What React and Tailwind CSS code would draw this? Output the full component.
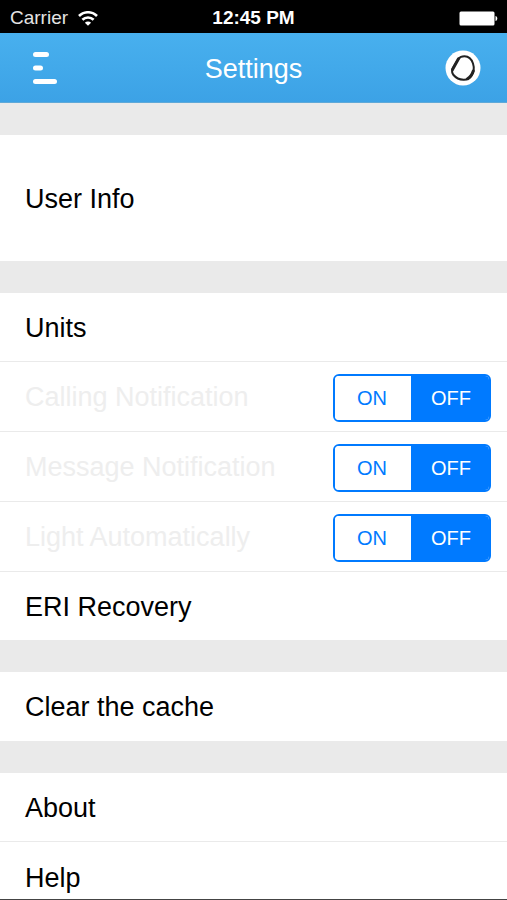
import React, { useState } from 'react';

const initialToggles = [
  { id: 'calling', label: 'Calling Notification', on: false },
  { id: 'message', label: 'Message Notification', on: false },
  { id: 'light', label: 'Light Automatically', on: false },
];

function StatusBar() {
  return (
    <div className="grid h-[33px] grid-cols-3 items-center bg-black pt-1 text-[19px] text-white">
      <div className="flex items-center gap-[10px] pl-[10px] text-[#e4e4e4]">
        <span>Carrier</span>
        <svg width="20" height="15" viewBox="0 0 20 15" fill="none" stroke="white" strokeWidth="2.6">
          <path d="M1 5a12.700 12.700 0 0 1 18 0" />
          <path d="M4.400 8.800a8 8 0 0 1 11.200 0" />
          <path d="M10 14.800 6.900 11.800a4.400 4.400 0 0 1 6.200 0z" fill="white" stroke="none" />
        </svg>
      </div>
      <div className="text-center font-bold">12:45 PM</div>
      <div className="flex justify-end pr-[9px]">
        <svg width="39" height="15" viewBox="0 0 39 15" fill="white">
          <rect x="0.5" y="0.5" width="35" height="14" rx="1.5" />
          <path d="M36.500 5c2.400.6 2.400 4.400 0 5z" />
        </svg>
      </div>
    </div>
  );
}

function NavBar() {
  return (
    <header className="grid h-[70px] grid-cols-3 items-center border-b border-[#5fa9d8] bg-linear-to-b from-[#48b0ee] to-[#3ca2e6] text-white">
      <button type="button" aria-label="Menu" className="ml-8 justify-self-start">
        <svg width="26" height="34" viewBox="0 0 26 34" fill="none" stroke="white" strokeWidth="5" strokeLinecap="round">
          <path d="M3.500 3.500h11M3.500 17h5M3.500 30.500h19" />
        </svg>
      </button>
      <h1 className="pt-[3px] text-center">Settings</h1>
      <button type="button" aria-label="Device" className="mr-[26px] justify-self-end">
        <svg width="36" height="36" viewBox="0 0 36 36">
          <circle cx="18" cy="18" r="17.5" fill="white" />
          <path
            d="M13.500 8.800C15 6.800 16.500 6.300 19.500 6.300C24 6.300 26.500 9 28 13.500C29.300 17.500 28.800 22 26.500 25.500C24.500 28.500 22 30 18.500 29.800C14.500 29.600 11 28 8.500 25C6.500 22.500 6.700 20.500 8 18Z"
            fill="none"
            stroke="#222"
            strokeWidth="2"
          />
          <path d="M7.500 19.500 13.500 8.800M28.300 21C27 25 25 27.500 22.500 28.800" fill="none" stroke="#222" strokeWidth="3" strokeLinecap="round" />
        </svg>
      </button>
    </header>
  );
}

function LinkRow({ label, height = 'h-[68px]' }) {
  return (
    <button type="button" className={`block w-full bg-white px-[25px] pt-[2px] text-left text-black ${height}`}>
      {label}
    </button>
  );
}

function ToggleRow({ label, on, onChange }) {
  return (
    <div className="flex h-[69px] items-center justify-between bg-white pt-[2px] pr-4 pl-[25px]">
      <span className="text-[#eeeeee]">{label}</span>
      <div
        role="group"
        aria-label={label}
        className="flex h-12 w-[158px] overflow-hidden rounded-md border-2 border-[#007aff] text-[20px]"
      >
        <button
          type="button"
          aria-pressed={on}
          onClick={() => onChange(true)}
          className={`w-[76px] pr-[2px] ${on ? 'bg-[#007aff] text-white' : 'bg-white text-[#007aff]'}`}
        >
          ON
        </button>
        <button
          type="button"
          aria-pressed={!on}
          onClick={() => onChange(false)}
          className={`flex-1 pl-[2px] ${on ? 'bg-white text-[#007aff]' : 'bg-[#007aff] text-white'}`}
        >
          OFF
        </button>
      </div>
    </div>
  );
}

export default function App() {
  const [toggles, setToggles] = useState(initialToggles);

  const setToggle = (id, on) => {
    setToggles(prev => prev.map(t => (t.id === id ? { ...t, on } : t)));
  };

  return (
    <div className="h-screen overflow-hidden border-b border-[#444444] bg-[#eaeaea] font-['Liberation_Sans',Arial,sans-serif] text-[27px]">
      <StatusBar />
      <NavBar />
      <main className="flex flex-col gap-8 pt-8">
        <LinkRow label="User Info" height="h-[126px]" />
        <section className="flex flex-col gap-px">
          <LinkRow label="Units" />
          {toggles.map(t => (
            <ToggleRow key={t.id} label={t.label} on={t.on} onChange={on => setToggle(t.id, on)} />
          ))}
          <LinkRow label="ERI Recovery" />
        </section>
        <LinkRow label="Clear the cache" height="h-[69px]" />
        <section className="flex flex-col gap-px">
          <LinkRow label="About" />
          <LinkRow label="Help" height="h-[70px]" />
        </section>
      </main>
    </div>
  );
}
